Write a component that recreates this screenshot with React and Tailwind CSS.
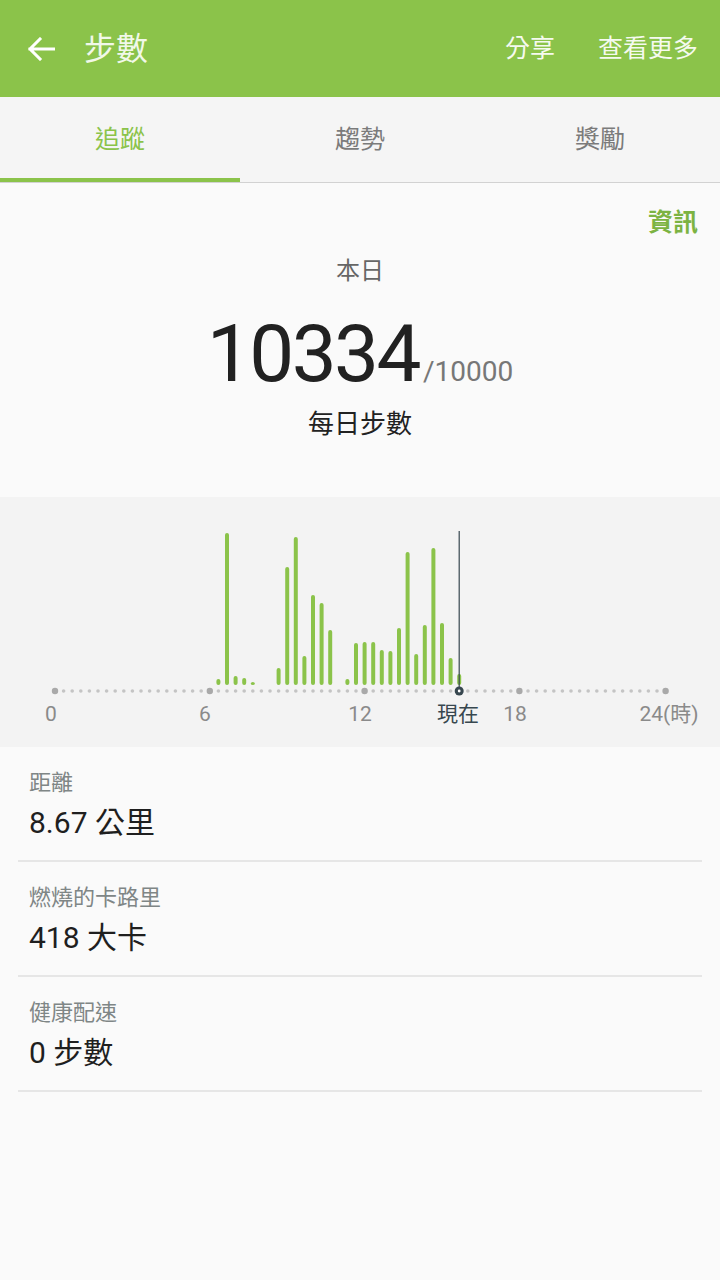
import React from "react";

const FONT = { fontFamily: 'Roboto, "Noto Sans CJK TC", sans-serif' };

const bars = [
  [19, 679], [20, 533], [21, 676], [22, 678], [23, 682],
  [26, 668], [27, 567], [28, 537], [29, 656], [30, 595], [31, 603], [32, 630],
  [34, 679], [35, 643], [36, 642], [37, 642], [38, 650], [39, 651], [40, 628],
  [41, 552], [42, 654], [43, 625], [44, 548], [45, 623], [46, 658], [47, 674],
];

const X0 = 55;
const STEP = 8.6;
const TOP = 497;
const xAt = (i) => X0 + i * STEP;

function Chart() {
  const dots = [];
  for (let i = 0; i <= 71; i++) {
    const major = i === 0 || i === 18 || i === 36 || i === 54 || i === 71;
    if (i === 47) continue;
    dots.push(
      <circle
        key={i}
        cx={xAt(i)}
        cy={194}
        r={major ? 3.2 : 1.8}
        fill={major ? "#a9a9a9" : "#c4c4c4"}
      />
    );
  }
  const nowX = xAt(47);
  return (
    <svg width="720" height="250" viewBox="0 0 720 250" className="block">
      {bars.map(([i, top]) => {
        const y = top - TOP;
        const h = 188 - y;
        return (
          <rect
            key={i}
            x={xAt(i) - 2}
            y={y}
            width="4"
            height={h}
            rx="2"
            fill="#8bc34a"
          />
        );
      })}
      {dots}
      <line x1={nowX} y1={34} x2={nowX} y2={194} stroke="#37474f" strokeWidth="1.2" />
      <circle cx={nowX} cy={194} r="4.5" fill="#37474f" />
      <circle cx={nowX} cy={194} r="1.4" fill="#ffffff" />
      <g style={FONT} fontSize="21" fill="#8a8a8a" textAnchor="middle">
        <text x="51" y="224">0</text>
        <text x="205" y="224">6</text>
        <text x="360" y="224">12</text>
        <text x="515" y="224">18</text>
        <text x="669" y="224">24(時)</text>
        <text x="458" y="224" fill="#37474f">現在</text>
      </g>
    </svg>
  );
}

function StatRow({ label, value }) {
  return (
    <div className="mx-[18px] border-b-2 border-[#e6e6e6] pl-[11px] pt-[22px] pb-[17px]">
      <div className="h-[28px] text-[22px] leading-[28px] text-[#7f8686]">{label}</div>
      <div className="mt-[6px] h-[40px] text-[30px] leading-[40px] text-[#1f1f1f]">{value}</div>
    </div>
  );
}

export default function App() {
  return (
    <div className="w-[720px] min-h-[1280px] bg-[#fafafa]" style={FONT}>
      {/* Header */}
      <div className="flex h-[97px] items-center bg-[#8bc34a] pr-[22px]">
        <div className="ml-[27px] flex h-[30px] w-[30px] items-center">
          <svg width="28" height="24" viewBox="0 0 28 24" fill="none">
            <path
              d="M27 12H3M13 2L3 12L13 22"
              stroke="#ffffff"
              strokeWidth="3"
              strokeLinecap="square"
              strokeLinejoin="miter"
            />
          </svg>
        </div>
        <div className="ml-[27px] text-[32px] leading-none text-[#f1f8e9]">步數</div>
        <div className="flex-1" />
        <div className="text-[25px] leading-none text-[#f5faef]">分享</div>
        <div className="ml-[43px] text-[25px] leading-none text-[#f5faef]">查看更多</div>
      </div>

      {/* Tabs */}
      <div className="bg-[#f5f5f5] border-b border-[#d2d2d2]">
        <div className="grid h-[81px] grid-cols-3 items-center pt-[5px]">
          <div className="text-center text-[25px] text-[#8bc34a]">追蹤</div>
          <div className="text-center text-[25px] text-[#7b7b7b]">趨勢</div>
          <div className="text-center text-[25px] text-[#7b7b7b]">獎勵</div>
        </div>
        <div className="grid grid-cols-3">
          <div className="h-[4px] bg-[#8bc34a]" />
        </div>
      </div>

      {/* Summary */}
      <div className="pt-[20px]">
        <div className="flex h-[40px] justify-end pr-[22px] text-[25px] font-bold leading-[40px] text-[#7cb342]">
          資訊
        </div>
        <div className="mt-[12px] h-[32px] text-center text-[24px] leading-[32px] text-[#666666]">
          本日
        </div>
        <div className="mt-[22px] flex h-[90px] items-baseline justify-center leading-[90px]">
          <span className="text-[80px] tracking-[-2.5px] text-[#212121]">10334</span>
          <span className="ml-[4px] text-[28px] text-[#777777]">/10000</span>
        </div>
        <div className="mt-[9px] h-[32px] text-center text-[26px] leading-[32px] text-[#222222]">
          每日步數
        </div>
      </div>

      {/* Chart */}
      <div className="mt-[57px] h-[250px] bg-[#f3f3f3]">
        <Chart />
      </div>

      {/* Stats */}
      <div>
        <StatRow label="距離" value="8.67 公里" />
        <StatRow label="燃燒的卡路里" value="418 大卡" />
        <StatRow label="健康配速" value="0 步數" />
      </div>
    </div>
  );
}
